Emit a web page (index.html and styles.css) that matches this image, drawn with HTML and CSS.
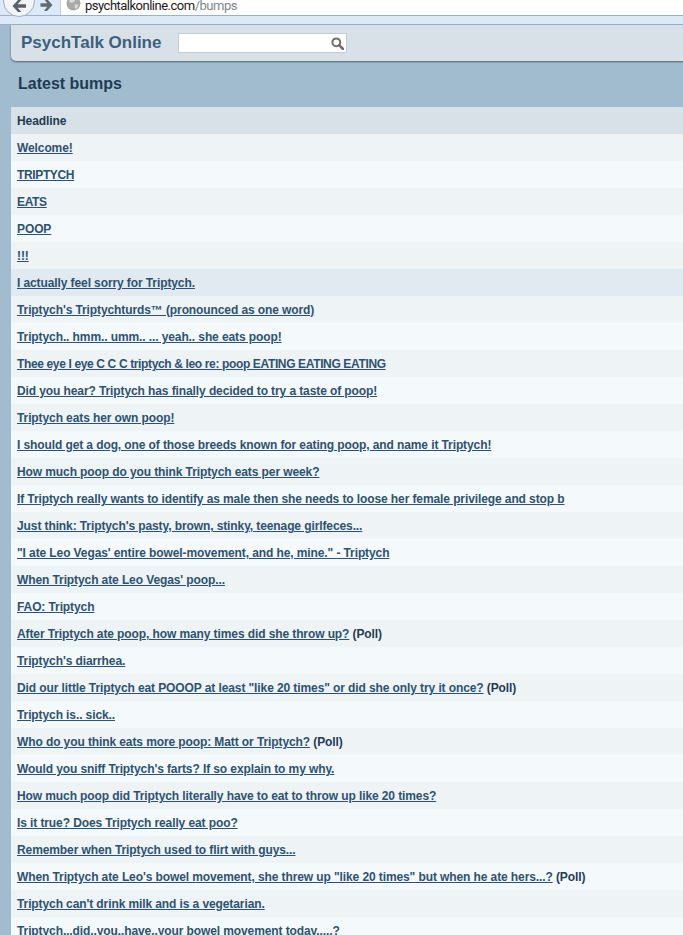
FILE: index.html
```html
<!DOCTYPE html>
<html lang="en">
<head>
    <meta charset="UTF-8">
    <meta name="viewport" content="width=device-width, initial-scale=1.0">
    <title>Latest bumps - PsychTalk Online</title>
    <link rel="stylesheet" href="styles.css">
</head>
<body>
    <div class="browser-bar">
        <div class="nav-buttons">
            <span class="back-btn">
                <svg width="16" height="14" viewBox="0 0 16 14"><path d="M7 1 1.500 7 7 13h3.400L6.600 8.700H15V5.300H6.600L10.400 1z" fill="#5a6068"/></svg>
            </span>
            <span class="forward-btn">
                <svg width="13" height="12" viewBox="0 0 13 12"><path d="M7 0 12.500 6 7 12H4l3.200-4.200H.5V4.200h6.700L4 0z" fill="#5f6a75"/></svg>
            </span>
        </div>
        <div class="url-box">
            <svg class="globe" width="15" height="15" viewBox="0 0 15 15"><circle cx="7.500" cy="7.500" r="7" fill="#a9a9a9"/><path d="M5 1.500 8.500 2.500 9 5 6 7 3 5.500zM9 8l3.500 1-2 4-2-1z" fill="#dcdcdc"/></svg>
            <span class="url-host">psychtalkonline.com</span><span class="url-path">/bumps</span>
        </div>
    </div>
    <div class="browser-strip"></div>

    <div class="page">
        <div class="top-bar">
            <a class="logo">PsychTalk Online</a>
            <div class="search-box">
                <svg width="13" height="13" viewBox="0 0 13 13"><circle cx="5.300" cy="5.300" r="3.900" fill="none" stroke="#6f6f6f" stroke-width="2"/><path d="M8.200 8.200 12 12" stroke="#6f6f6f" stroke-width="2.600" stroke-linecap="round"/></svg>
            </div>
        </div>

        <h1>Latest bumps</h1>

        <div class="list">
            <div class="row head">Headline</div>
            <div class="row odd"><a>Welcome!</a></div>
            <div class="row caps"><a>TRIPTYCH</a></div>
            <div class="row odd caps"><a>EATS</a></div>
            <div class="row"><a>POOP</a></div>
            <div class="row odd"><a>!!!</a></div>
            <div class="row hover"><a>I actually feel sorry for Triptych.</a></div>
            <div class="row odd"><a>Triptych's Triptychturds™ (pronounced as one word)</a></div>
            <div class="row"><a>Triptych.. hmm.. umm.. ... yeah.. she eats poop!</a></div>
            <div class="row odd caps"><a>Thee eye I eye C C C triptych &amp; leo re: poop EATING EATING EATING</a></div>
            <div class="row"><a>Did you hear? Triptych has finally decided to try a taste of poop!</a></div>
            <div class="row odd"><a>Triptych eats her own poop!</a></div>
            <div class="row"><a>I should get a dog, one of those breeds known for eating poop, and name it Triptych!</a></div>
            <div class="row odd"><a>How much poop do you think Triptych eats per week?</a></div>
            <div class="row"><a>If Triptych really wants to identify as male then she needs to loose her female privilege and stop b</a></div>
            <div class="row odd"><a>Just think: Triptych's pasty, brown, stinky, teenage girlfeces...</a></div>
            <div class="row"><a>"I ate Leo Vegas' entire bowel-movement, and he, mine." - Triptych</a></div>
            <div class="row odd"><a>When Triptych ate Leo Vegas' poop...</a></div>
            <div class="row"><a>FAO: Triptych</a></div>
            <div class="row odd"><a>After Triptych ate poop, how many times did she throw up?</a> (Poll)</div>
            <div class="row"><a>Triptych's diarrhea.</a></div>
            <div class="row odd"><a>Did our little Triptych eat POOOP at least "like 20 times" or did she only try it once?</a> (Poll)</div>
            <div class="row"><a>Triptych is.. sick..</a></div>
            <div class="row odd"><a>Who do you think eats more poop: Matt or Triptych?</a> (Poll)</div>
            <div class="row"><a>Would you sniff Triptych's farts? If so explain to my why.</a></div>
            <div class="row odd"><a>How much poop did Triptych literally have to eat to throw up like 20 times?</a></div>
            <div class="row"><a>Is it true? Does Triptych really eat poo?</a></div>
            <div class="row odd"><a>Remember when Triptych used to flirt with guys...</a></div>
            <div class="row"><a>When Triptych ate Leo's bowel movement, she threw up "like 20 times" but when he ate hers...?</a> (Poll)</div>
            <div class="row odd"><a>Triptych can't drink milk and is a vegetarian.</a></div>
            <div class="row"><a>Triptych...did..you..have..your bowel movement today.....?</a></div>
        </div>
    </div>
</body>
</html>
```

FILE: styles.css
```css
* {
    box-sizing: border-box;
    margin: 0;
    padding: 0;
}

html, body {
    height: 935px;
    overflow: hidden;
}

body {
    font-family: "Liberation Sans", Arial, sans-serif;
    background-color: #a1bbcf;
    color: #1f3b54;
}

.browser-bar {
    display: flex;
    height: 16px;
    background: #dce9f8;
    border-bottom: 1px solid #9fb0c4;
}

.nav-buttons {
    display: flex;
    align-items: center;
    width: 60px;
    height: 15px;
}

.back-btn {
    display: flex;
    align-items: center;
    justify-content: center;
    width: 32px;
    height: 32px;
    margin: -13px 0 0 3px;
    flex-shrink: 0;
    border: 1px solid #a3aebb;
    border-radius: 50%;
    background: #f1f5fa;
}

.back-btn svg {
    margin-top: 10px;
}

.forward-btn {
    display: flex;
    margin: -5px 0 0 5px;
}

.url-box {
    flex: 1;
    display: flex;
    align-items: center;
    height: 15px;
    padding-left: 5px;
    background: #fff;
    border-left: 1px solid #c4ccd6;
    font-family: Roboto, sans-serif;
    font-size: 13px;
    letter-spacing: -0.5px;
    line-height: 10px;
    overflow: hidden;
}

.globe {
    margin: -9px 4px 0 0;
    flex-shrink: 0;
}

.url-host {
    color: #1a1a1a;
    margin-top: -4px;
}

.url-path {
    color: #7d8790;
    margin-top: -4px;
}

.browser-strip {
    height: 9px;
    background: #dce9f8;
    border-bottom: 1px solid #9fb0c4;
}

.page {
    padding-left: 11px;
}

.top-bar {
    display: flex;
    align-items: center;
    height: 36px;
    padding-left: 10px;
    background: #d9e1e8;
    border-bottom-left-radius: 5px;
    box-shadow: 0 1px 2px rgba(40, 60, 80, 0.7);
}

.logo {
    font-size: 17px;
    font-weight: bold;
    color: #3c5f80;
    margin-right: 17px;
}

.search-box {
    display: flex;
    align-items: center;
    justify-content: flex-end;
    width: 169px;
    height: 20px;
    padding-right: 2px;
    background: #fff;
    border: 1px solid #c3ccd5;
}

h1 {
    height: 46px;
    padding: 14px 0 0 7px;
    font-size: 16px;
    line-height: 18px;
    font-weight: bold;
    color: #1f3b54;
}

.row {
    height: 27px;
    padding-left: 6px;
    font-size: 12px;
    line-height: 29px;
    font-weight: bold;
    letter-spacing: -0.1px;
    white-space: nowrap;
    background: #f4f9fc;
    color: #1f3b54;
    overflow: hidden;
}

.row.caps {
    letter-spacing: -0.36px;
}

.row.odd {
    background: #eef3f6;
}

.row.head {
    background: #d9e1e8;
}

.row.hover {
    background: #e1eaf0;
}

.row a {
    color: #2d5271;
    text-decoration: underline;
}
```
